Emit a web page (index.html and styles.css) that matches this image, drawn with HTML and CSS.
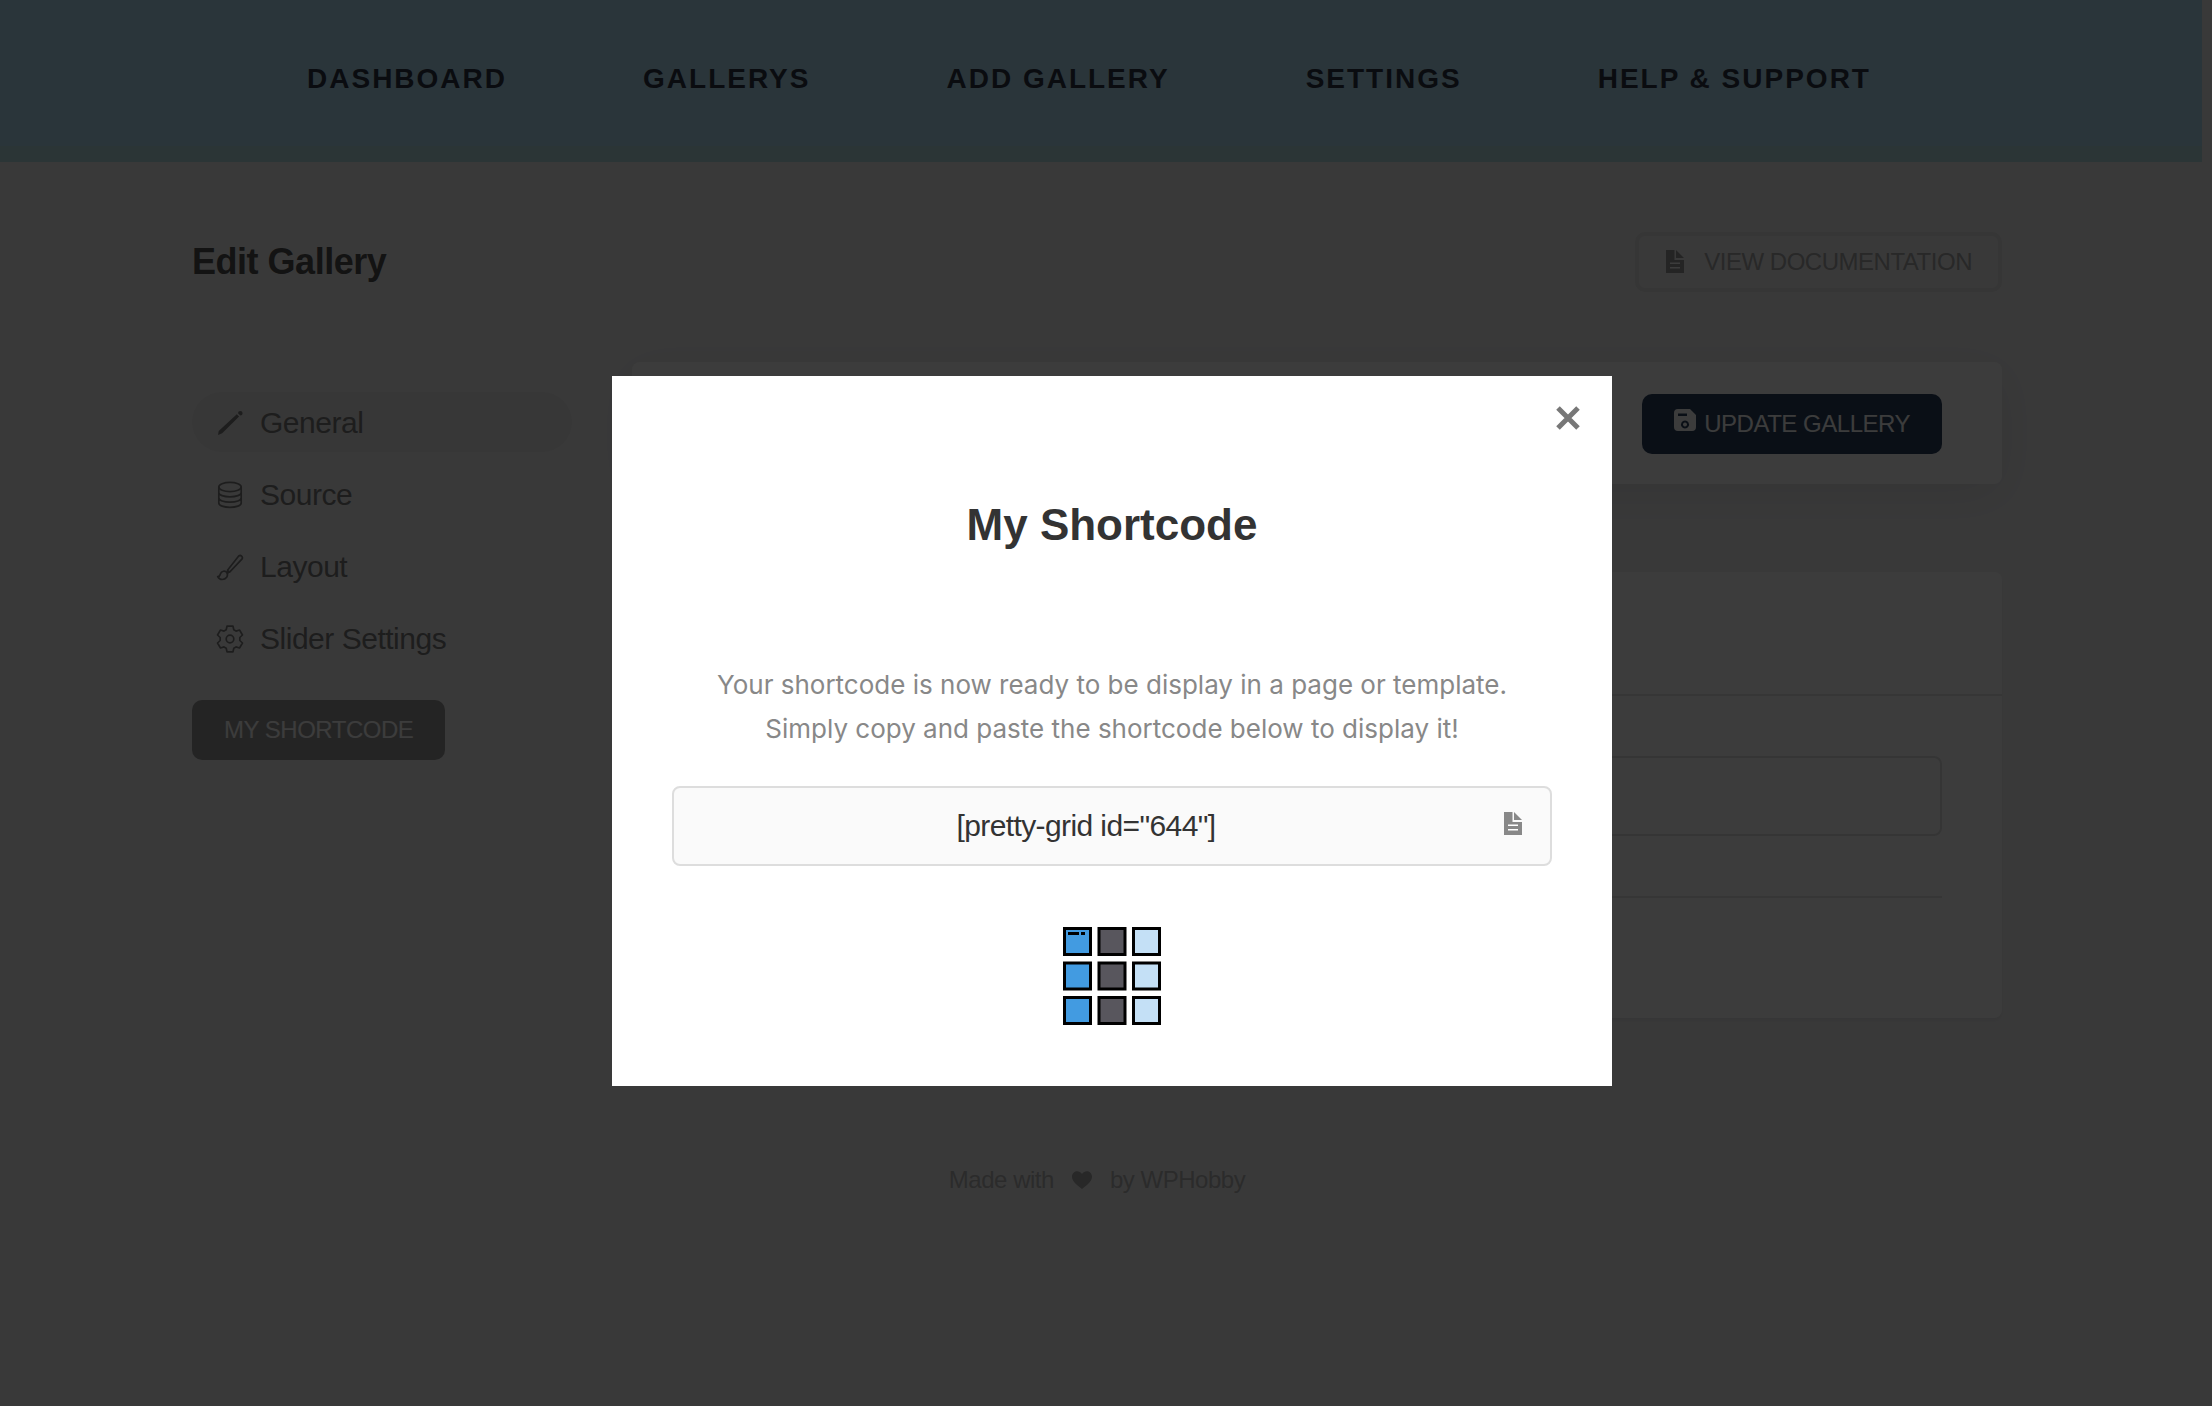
FILE: index.html
```html
<!DOCTYPE html>
<html lang="en">
<head>
<meta charset="utf-8">
<meta name="viewport" content="width=device-width, initial-scale=1">
<title>Edit Gallery</title>
<link rel="stylesheet" href="styles.css">
</head>
<body>
<svg class="sprite" aria-hidden="true">
  <symbol id="file" viewBox="0 0 18 23">
    <path d="M0 0h8.500v10H18v13H0z"/><path d="M10 0l8 8h-8z"/>
    <path class="cut" d="M4 12.500h10v1.400H4zM4 17h10v1.400H4z"/>
  </symbol>
</svg>
<header class="topbar">
  <nav class="nav" aria-label="Main">
    <a href="#">DASHBOARD</a>
    <a href="#">GALLERYS</a>
    <a href="#">ADD GALLERY</a>
    <a href="#">SETTINGS</a>
    <a href="#">HELP &amp; SUPPORT</a>
  </nav>
</header>

<div class="page">
  <div class="page-head">
    <h1>Edit Gallery</h1>
    <a class="btn btn-outline" href="#"><svg class="icon-file"><use href="#file"/></svg>VIEW DOCUMENTATION</a>
  </div>

  <div class="columns">
    <aside class="side">
      <a class="tab tab-active" href="#">
        <svg viewBox="0 0 24 24"><path class="solid" d="M18.800 3.200l2.300 2.300L4.200 22.200 0 24l.7-4zM20 2.200a2.300 2.300 0 1 1 2.300 2.300z"/></svg>
        General
      </a>
      <a class="tab" href="#">
        <svg viewBox="0 0 24 24"><ellipse cx="12" cy="4" rx="11.200" ry="4.600"/><path d="M.8 4v16c0 2.600 5 4.300 11.200 4.300S23.200 22.600 23.200 20V4M.8 9.500c0 2.600 5 4.300 11.200 4.300s11.200-1.700 11.200-4.300M.8 14.800c0 2.600 5 4.300 11.200 4.300s11.200-1.700 11.200-4.300"/></svg>
        Source
      </a>
      <a class="tab" href="#">
        <svg viewBox="0 0 24 24"><path d="M9.500 15.300L20.500 1.200c2.200-1.800 5 .6 3.400 3L11.600 17.200zM8.800 16.200l2.200 2M8.800 17.500c2 3.500-.8 7-4.600 7-2 0-3.600-1.200-4.500-3 2.200.3 2-1 2.700-2.600 1.100-2.900 4.600-3.600 6.400-1.400z"/></svg>
        Layout
      </a>
      <a class="tab" href="#">
        <svg viewBox="0 0 24 24"><circle cx="12" cy="12" r="3.800"/><path d="M9-.8h6l.8 3.600 2.200 1.300 3.500-1.100 3 5-2.700 2.500v3l2.700 2.500-3 5-3.500-1.100-2.200 1.300-.8 3.600H9l-.8-3.600L6 19.900 2.500 21l-3-5 2.700-2.500v-3L-.5 8l3-5L6 4.100l2.200-1.300z"/></svg>
        Slider Settings
      </a>
      <button class="btn btn-grey" type="button">MY SHORTCODE</button>
    </aside>

    <main class="content">
      <div class="card toolbar">
        <button class="btn btn-navy" type="button"><svg class="icon-save" viewBox="0 0 22 22"><path d="M4 0h12l6 6v12a4 4 0 0 1-4 4H4a4 4 0 0 1-4-4V4a4 4 0 0 1 4-4zM4 4.500V7h9V4.500zM11 11.500a4 4 0 1 0 .01 0zM11 13.500a2 2 0 1 1-.01 0z"/></svg>UPDATE GALLERY</button>
      </div>
      <section class="card panel">
        <div class="panel-head"></div>
        <div class="panel-body">
          <input class="field" type="text" aria-label="Gallery name">
          <div class="rule"></div>
        </div>
      </section>
    </main>
  </div>

  <footer class="footer">Made with <svg viewBox="0 0 20 18"><path d="M10 18C4 13.500 0 10 0 5.500 0 0 7-2 10 3c3-5 10-3 10 2.500C20 10 16 13.500 10 18z"/></svg> by WPHobby</footer>
</div>

<div class="overlay">
  <div class="modal" role="dialog" aria-labelledby="modal-title">
    <button class="close" type="button" aria-label="Close"><svg viewBox="0 0 24 24"><path d="M2 2l20 20M22 2L2 22"/></svg></button>
    <h2 id="modal-title">My Shortcode</h2>
    <p>Your shortcode is now ready to be display in a page or template.<br>Simply copy and paste the shortcode below to display it!</p>
    <div class="code">
      <input type="text" aria-label="Shortcode" value="[pretty-grid id=&quot;644&quot;]" readonly>
      <button type="button" aria-label="Copy shortcode"><svg class="icon-file"><use href="#file"/></svg></button>
    </div>
    <svg class="logo" viewBox="0 0 98 98" aria-hidden="true">
      <g fill="#429be1"><rect x="1.500" y="1.500" width="26" height="26"/><rect x="1.500" y="36" width="26" height="26"/><rect x="1.500" y="70.500" width="26" height="26"/></g>
      <g fill="#58565d"><rect x="36" y="1.500" width="26" height="26"/><rect x="36" y="36" width="26" height="26"/><rect x="36" y="70.500" width="26" height="26"/></g>
      <g fill="#c4e0f6"><rect x="70.500" y="1.500" width="26" height="26"/><rect x="70.500" y="36" width="26" height="26"/><rect x="70.500" y="70.500" width="26" height="26"/></g>
      <path d="M5 6.500h11M18 6.500h4"/>
    </svg>
  </div>
</div>
</body>
</html>
```
FILE: styles.css
```css
* { box-sizing: border-box; }

body {
  margin: 0;
  min-height: 100vh;
  background: #f0f0f1;
  color: #666;
  font-family: "Liberation Sans", Arial, sans-serif;
  font-size: 24px;
  letter-spacing: -0.02em;
}

a { color: inherit; text-decoration: none; }

button, input {
  font: inherit;
  letter-spacing: inherit;
  border: 0;
  padding: 0;
}

h1, h2, p { margin: 0; }

svg { display: block; flex: none; overflow: visible; }

.sprite { position: absolute; width: 0; height: 0; }

.topbar {
  height: 162px;
  margin-right: 10px;
  padding: 63px 24px 0 0;
  background: linear-gradient(#a4d9f4 146px, #a8d9e2 146px);
}

.nav {
  display: flex;
  justify-content: center;
  gap: 136px;
  color: #061023;
  font-size: 28px;
  font-weight: bold;
  line-height: 32px;
  letter-spacing: 2px;
}

.page { padding: 70px 210px 0 192px; }

.page-head {
  display: flex;
  justify-content: space-between;
  align-items: center;
}

h1 { color: #333; font-size: 36px; line-height: 60px; }

.btn {
  display: flex;
  align-items: center;
  height: 60px;
  border-radius: 10px;
  line-height: 28px;
}

.btn-outline {
  gap: 20px;
  padding: 0 26px 0 27px;
  border: 4px solid #dedede;
  color: #999;
}

.btn-outline .icon-file { margin-bottom: 2px; }

.btn-grey { margin-top: 20px; padding: 0 32px; background: #888; color: #fff; }

.btn-navy { gap: 8px; padding: 0 32px; background: #061f42; color: #fff; }

.icon-file { width: 18px; height: 23px; fill: #888; }
.cut { fill: #fff; }
.icon-save { width: 22px; height: 22px; margin-bottom: 8px; fill: #fff; fill-rule: evenodd; }

.columns { display: flex; gap: 60px; margin-top: 70px; }

.side {
  display: flex;
  flex-direction: column;
  align-items: flex-start;
  gap: 12px;
  width: 380px;
  padding-top: 30px;
}

.tab {
  display: flex;
  align-items: center;
  gap: 18px;
  width: 100%;
  height: 60px;
  padding: 2px 26px 0;
  border-radius: 30px;
  font-size: 30px;
}

.tab-active { background: #e4e4e4; }
.tab svg { width: 24px; height: 24px; fill: none; stroke: #666; stroke-width: 1.7; stroke-linejoin: round; }
.tab .solid { fill: #666; stroke: none; }

.content { flex: 1; }

.card { border-radius: 8px; background: #fff; }

.toolbar {
  display: flex;
  justify-content: flex-end;
  padding: 32px 60px 30px;
  box-shadow: 0 10px 50px rgba(0, 0, 0, 0.1);
}

.panel { margin-top: 88px; box-shadow: 0 3px 3px rgba(0, 0, 0, 0.06); }
.panel-head { height: 124px; border-bottom: 2px solid #e0e0e0; }
.panel-body { padding: 60px 60px 120px; }

.field {
  display: block;
  width: 100%;
  height: 80px;
  border: 2px solid #dadada;
  border-radius: 8px;
  background: #fff;
}

.rule { margin-top: 60px; border-top: 2px solid #e0e0e0; }

.footer {
  display: flex;
  justify-content: center;
  gap: 18px;
  margin-top: 148px;
  color: #aaa;
  line-height: 28px;
}

.footer svg { width: 20px; height: 18px; margin-top: 5px; fill: #999; }

.overlay {
  position: fixed;
  inset: 0;
  display: flex;
  justify-content: center;
  align-items: flex-start;
  padding: 376px 0 0 12px;
  background: rgba(11, 11, 11, 0.8);
}

.modal {
  position: relative;
  display: flex;
  flex-direction: column;
  align-items: center;
  width: 1000px;
  padding: 124px 60px 61px;
  background: #fff;
  letter-spacing: normal;
}

.close {
  position: absolute;
  top: 30px;
  right: 32px;
  background: none;
}

.close svg { width: 24px; height: 24px; fill: none; stroke: #777; stroke-width: 5; }

h2 { color: #333; font-size: 44px; line-height: 50px; }

.modal p {
  margin: 113px 0 35px;
  color: #888;
  font-family: Inter, sans-serif;
  font-size: 26px;
  line-height: 44px;
  text-align: center;
}

.code {
  display: flex;
  align-items: center;
  width: 100%;
  height: 80px;
  padding: 0 28px 0 20px;
  border: 2px solid #ddd;
  border-radius: 8px;
  background: #fafafa;
}

.code input {
  flex: 1;
  min-width: 0;
  margin-right: 26px;
  background: none;
  color: #333;
  font-size: 30px;
  letter-spacing: -0.02em;
  text-align: center;
}

.code button { margin-bottom: 6px; background: none; }

.logo { width: 98px; height: 98px; margin-top: 61px; stroke: #000; stroke-width: 3; }
```
